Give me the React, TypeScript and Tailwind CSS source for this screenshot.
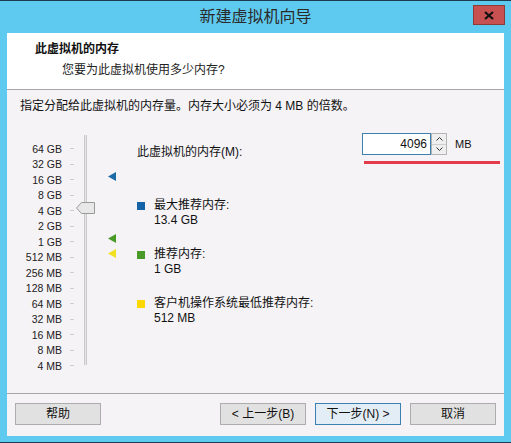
import React from "react"

const FONT = { fontFamily: '"Liberation Sans", "Noto Sans CJK SC", sans-serif' }

const sizes = [
  "64 GB", "32 GB", "16 GB", "8 GB", "4 GB", "2 GB", "1 GB",
  "512 MB", "256 MB", "128 MB", "64 MB", "32 MB", "16 MB", "8 MB", "4 MB",
]

function Btn({ label, active = false }: { label: string; active?: boolean }) {
  return (
    <button
      className={`h-[22px] w-[86px] border text-[12px] text-[#111] ${
        active ? "border-[#3c7fb1] bg-[#e3edf6]" : "border-[#adadad] bg-[#e1e1e1]"
      }`}
    >
      {label}
    </button>
  )
}

function Slider() {
  return (
    <div className="relative flex w-[104px] pt-[2px]">
      {/* labels */}
      <div className="flex w-[42px] flex-col items-end">
        {sizes.map((s) => (
          <div key={s} className="flex h-[15.5px] items-center text-[10.5px] leading-none text-[#222]">
            {s}
          </div>
        ))}
      </div>
      {/* ticks */}
      <div className="ml-[8px] flex w-[5px] flex-col">
        {sizes.map((s) => (
          <div key={s} className="flex h-[15.5px] items-center">
            <div className="h-px w-[4px] bg-[#cfcdd0]" />
          </div>
        ))}
      </div>
      {/* track */}
      <div className="ml-[9px] mt-[-6px] h-[230px] w-[3px] border-x border-[#c9c9c9] bg-[#e6e6e6]" />
      {/* thumb */}
      <svg className="absolute left-[56px] top-[63px]" width="19" height="12" viewBox="0 0 19 12">
        <path d="M0.5 6 L5.5 0.5 H18.5 V11.5 H5.5 Z" fill="#e8e8e8" stroke="#9a9a9a" />
      </svg>
      {/* markers */}
      <svg className="absolute left-[88px] top-[33px]" width="9" height="9" viewBox="0 0 9 9">
        <path d="M0 4.5 L8 0 V9 Z" fill="#1c6ba8" />
      </svg>
      <svg className="absolute left-[88px] top-[95px]" width="9" height="9" viewBox="0 0 9 9">
        <path d="M0 4.5 L8 0 V9 Z" fill="#4a9a2a" />
      </svg>
      <svg className="absolute left-[88px] top-[110px]" width="9" height="9" viewBox="0 0 9 9">
        <path d="M0 4.5 L8 0 V9 Z" fill="#f0e020" />
      </svg>
    </div>
  )
}

function Legend({ color, title, value }: { color: string; title: string; value: string }) {
  return (
    <div className="flex items-start">
      <div className={`mt-[4px] h-[8px] w-[8px] ${color}`} />
      <div className="ml-[9px] text-[12px] leading-[15px] text-[#111]">
        <div>{title}</div>
        <div>{value}</div>
      </div>
    </div>
  )
}

export default function App() {
  return (
    <div style={FONT} className="flex h-[443px] w-[511px] flex-col border-y border-[#1b3d52] bg-[#5ecaf0]">
      {/* title bar */}
      <div className="relative flex h-[32px] shrink-0 items-center justify-center">
        <span className="text-[16px] text-[#2a2a2a]">新建虚拟机向导</span>
        <div className="absolute right-[6px] top-[4px] flex h-[20px] w-[32px] items-center justify-center border border-[#8e3a36] bg-[#c75050]">
          <svg width="10" height="9" viewBox="0 0 10 9">
            <path d="M1 1 L9 8 M9 1 L1 8" stroke="#111" strokeWidth="2.2" />
          </svg>
        </div>
      </div>

      <div className="mx-[7px] flex flex-1 flex-col bg-[#f5f3f6]">
        {/* header */}
        <div className="h-[57px] shrink-0 border-b border-[#a7a7a7] bg-white pl-[28px] pt-[8px]">
          <div className="text-[12px] font-bold leading-[16px] text-[#111]">此虚拟机的内存</div>
          <div className="ml-[27px] mt-[5px] text-[12px] leading-[16px] text-[#222]">您要为此虚拟机使用多少内存?</div>
        </div>

        {/* body */}
        <div className="flex h-[304px] shrink-0 flex-col border-b border-[#a7a7a7] pl-[13px] pt-[8px]">
          <div className="text-[12px] leading-[16px] text-[#111]">
            指定分配给此虚拟机的内存量。内存大小必须为 4 MB 的倍数。
          </div>
          <div className="mt-[25px] flex">
            <Slider />
            <div className="ml-[13px] flex flex-1 flex-col">
              <div className="flex items-center">
                <span className="w-[225px] text-[12px] text-[#111]">此虚拟机的内存(M):</span>
                <div className="mt-[-6px] flex flex-col">
                  <div className="flex items-center">
                    <div className="flex h-[22px] w-[69px] items-center justify-end border border-[#3c7fb1] bg-white pr-[3px] text-[12px] text-[#111]">
                      4096
                    </div>
                    <div className="flex h-[22px] w-[16px] flex-col border border-[#b5b5b5] bg-[#efefef]">
                      <div className="flex flex-1 items-center justify-center border-b border-[#cfcfcf]">
                        <svg width="7" height="4" viewBox="0 0 7 4">
                          <path d="M0.5 3.5 L3.5 0.5 L6.5 3.5" stroke="#333" fill="none" />
                        </svg>
                      </div>
                      <div className="flex flex-1 items-center justify-center">
                        <svg width="7" height="4" viewBox="0 0 7 4">
                          <path d="M0.5 0.5 L3.5 3.5 L6.5 0.5" stroke="#333" fill="none" />
                        </svg>
                      </div>
                    </div>
                    <span className="ml-[8px] text-[11px] text-[#111]">MB</span>
                  </div>
                  <div className="ml-[2px] mt-[6px] h-[3px] w-[136px] bg-[#e43b4c]" />
                </div>
              </div>
              <div className="mt-[34px] flex flex-col gap-[19px]">
                <Legend color="bg-[#1363a6]" title="最大推荐内存:" value="13.4 GB" />
                <Legend color="bg-[#4a9a2a]" title="推荐内存:" value="1 GB" />
                <Legend color="bg-[#fdd800]" title="客户机操作系统最低推荐内存:" value="512 MB" />
              </div>
            </div>
          </div>
        </div>

        {/* footer */}
        <div className="flex flex-1 items-start px-[8px] pt-[9px]">
          <Btn label="帮助" />
          <div className="ml-auto flex gap-[9px]">
            <Btn label="< 上一步(B)" />
            <Btn label="下一步(N) >" active />
            <Btn label="取消" />
          </div>
        </div>
      </div>
      <div className="h-[6px] shrink-0" />
    </div>
  )
}
